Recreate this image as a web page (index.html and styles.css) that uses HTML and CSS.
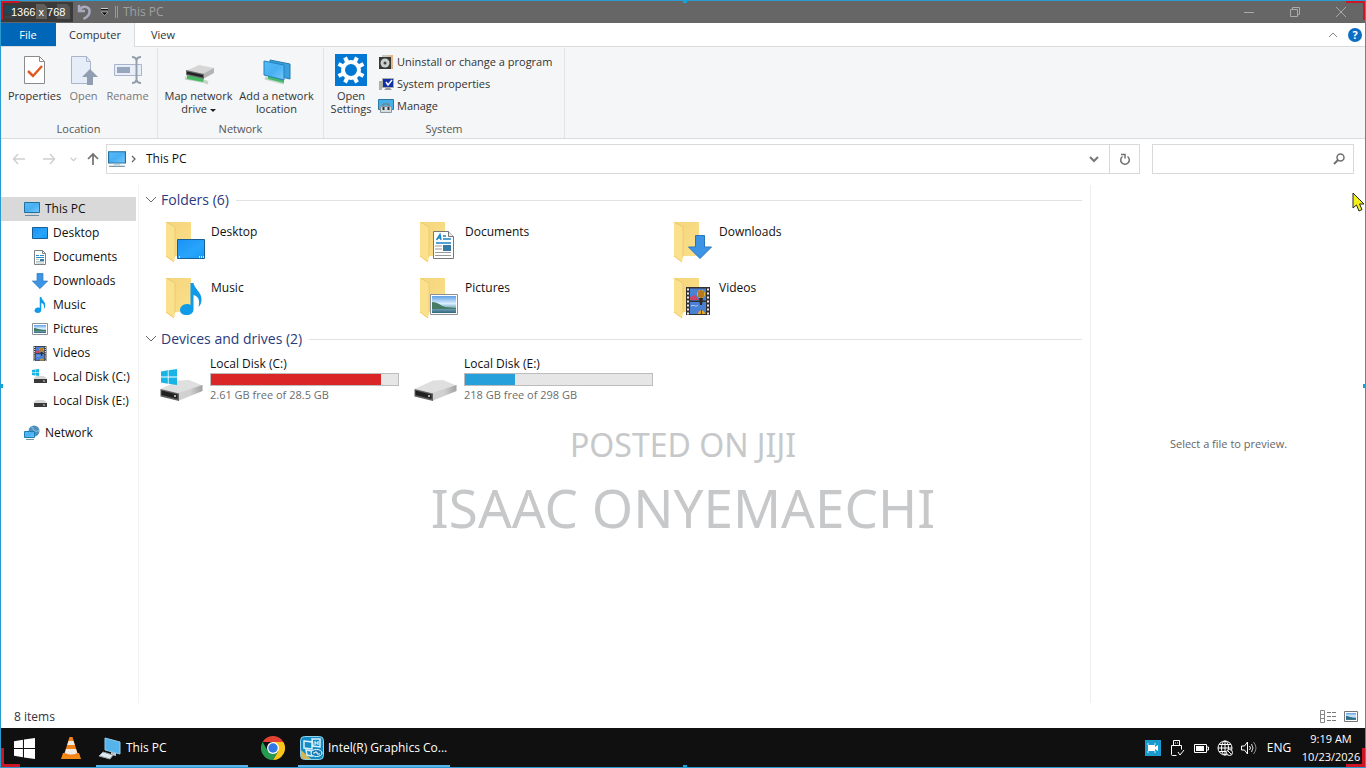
FILE: index.html
```html
<!DOCTYPE html>
<html lang="en">
<head>
<meta charset="utf-8">
<title>This PC</title>
<link rel="stylesheet" href="styles.css">
</head>
<body>
<svg class="defs" aria-hidden="true">
  <defs>
    <linearGradient id="blue" x1="0" y1="0" x2="1" y2="1"><stop offset="0" stop-color="#55bdf8"/><stop offset=".5" stop-color="#48b0f2"/><stop offset="1" stop-color="#75c8fb"/></linearGradient>
    <linearGradient id="desk" x1="0" y1="0" x2="1" y2="1"><stop offset="0" stop-color="#1c91f5"/><stop offset=".6" stop-color="#27a5fb"/><stop offset="1" stop-color="#1699f5"/></linearGradient>
    <linearGradient id="fold" x1="0" y1="0" x2="1" y2="1"><stop offset="0" stop-color="#f5d57c"/><stop offset="1" stop-color="#fbdf8b"/></linearGradient>
    <linearGradient id="metal" x1="0" y1="0" x2="1" y2="0"><stop offset="0" stop-color="#d2d2d2"/><stop offset=".5" stop-color="#d0d0d0"/><stop offset="1" stop-color="#a0a0a0"/></linearGradient>
    <linearGradient id="sky" x1="0" y1="0" x2="0" y2="1"><stop offset="0" stop-color="#5e9fe6"/><stop offset=".45" stop-color="#dcefff"/><stop offset=".6" stop-color="#9dc3d8"/><stop offset="1" stop-color="#2f6680"/></linearGradient>
    <symbol id="i-pc" viewBox="0 0 16 16"><path d="M.5 1.500h15v10H.5z" fill="url(#blue)" stroke="#22709e"/><path d="M5 13h6" stroke="#b9d3e2"/><path d="M1 14.500h14" stroke="#6f8b9b"/></symbol>
    <symbol id="i-desktop" viewBox="0 0 28 20"><path d="M.5.5h27v19H.5z" fill="url(#desk)" stroke="#185f95"/><path d="M2 18h1M22 18h1M24 18h1M26 18h1" stroke="#fff" stroke-width="1.500"/></symbol>
    <symbol id="i-doc" viewBox="0 0 21 28"><path d="M.5.5h15l5 5v22H.5z" fill="#fff" stroke="#777"/><path d="M15.500.5v5h5" fill="#eee" stroke="#777"/><path d="M3.500 9L7 3.500 8 9M5 7h3M10 5h3M10 8h8M3 12h15" fill="none" stroke="#1b83c6" stroke-width="1.400"/><path d="M10 14h8v6h-8z" fill="#3778a4"/><path d="M2 15h7M2 18h7M2 21.500h16M2 24.500h16" stroke="#999"/></symbol>
    <symbol id="i-doc-small" viewBox="0 0 12 15"><path d="M.5.5h8l3 3v11H.5z" fill="#fff" stroke="#7d8286"/><path d="M8.500.5v3h3" fill="none" stroke="#7d8286"/><path d="M2 5.500h3M6 5.500h4M2 7.500h8" stroke="#2b8ac4"/><path d="M6 9h4v2H6z" fill="#3778a4"/><path d="M2 9.500h3M2 11.500h8M2 13h8" stroke="#8aa" stroke-width=".7"/></symbol>
    <symbol id="i-down" viewBox="0 0 24 24"><path d="M7.500.5h9V12h7L12 23.500.5 12h7z" fill="#3e94e4" stroke="#2877bd"/></symbol>
    <symbol id="i-music" viewBox="0 0 22 32"><path d="M10.500 0h3c1 6 8 9 8 16 0 4-1 6-3 8 2-8-1-11-5-12v14c0 4-3 6-7 6S0 30 0 27s3-6 7-6c1.500 0 2.500.3 3.500 1z" fill="#109be8"/></symbol>
    <symbol id="i-pic" viewBox="0 0 28 21"><path d="M.5.5h27v20H.5z" fill="#fff" stroke="#8b9297"/><path d="M2 2h24v17H2z" fill="url(#sky)"/><path d="M2 8c5 0 8 3 13 5l11 1v1H2z" fill="#467b64"/></symbol>
    <symbol id="i-pic-small" viewBox="0 0 16 12"><path d="M.5.5h15v11H.5z" fill="#fff" stroke="#8b9297"/><path d="M2 2h12v8H2z" fill="url(#sky)"/><path d="M2 5c3 0 5 2 12 2v1H2z" fill="#467b64"/></symbol>
    <symbol id="i-video" viewBox="0 0 24 28"><path d="M0 0h24v28H0z" fill="#33302f"/><path d="M4 1.500h16v12H4zM4 15h16v12H4z" fill="#4b81d5"/><path d="M4 10l5-2 4 5H4z" fill="#cb4766"/><circle cx="15" cy="7" r="4" fill="#e5b622"/><path d="M15 3v8M13 4v6M17 4v6" stroke="#8a3d24"/><path d="M13 11h4l-1 7h-2z" fill="#342a22"/><path d="M12 27c0-5 7-5 7 0z" fill="#e6a824"/><path d="M15.500 23v4" stroke="#8a3d24"/><path d="M5 19c3-2 5 2 7-1" stroke="#b8d4ed" fill="none"/><path d="M2 1.500v26M22 1.500v26" stroke="#eee" stroke-width="2" stroke-dasharray="2 2"/></symbol>
    <symbol id="i-drive" viewBox="0 0 43 21"><path d="M.5 9L19 .5l10-.5 13.500 5.500L19 15z" fill="#dfdfdf"/><path d="M18 13l24.500-8v6L18 21z" fill="url(#metal)"/><path d="M.5 9L19 13.500V21L.5 16.500z" fill="#5f5f5f"/><path d="M1.500 10.500l16 4v4.500l-16-4z" fill="#202020"/><path d="M14 16h2" stroke="#ddd" stroke-width="1.500"/></symbol>
    <symbol id="i-win" viewBox="0 0 20 20"><path d="M0 3l8.500-1.300v7.800H0zM9.500 1.500L20 0v9.500H9.500zM0 10.500h8.500v7.800L0 17zM9.500 10.500H20V20L9.500 18.500z" fill="currentColor"/></symbol>
    <symbol id="i-sdrive" viewBox="0 0 16 16"><path d="M4 7h8l3 3H1z" fill="#d8d8d8"/><path d="M2 10h13v4H2z" fill="#393939"/><path d="M11 12h2" stroke="#ddd"/></symbol>
    <symbol id="i-folder" viewBox="0 0 27 42"><path d="M1 1h25v34H9z" fill="url(#fold)"/><path d="M1 1l9 5v30l-1 5-8-6z" fill="#fbe18d"/><path d="M1 1l9 5v30" fill="none" stroke="#e4bf61" stroke-width=".6"/><path d="M1 35l8 6" stroke="#f2c757"/></symbol>
    <symbol id="i-net" viewBox="0 0 16 16"><circle cx="10" cy="6" r="5.500" fill="#4e8fbd"/><path d="M7 2c3 0 1 3 4 4s3-2 4 1" stroke="#9bcbe2" fill="none"/><path d="M.5 6.500h10v6H.5z" fill="url(#blue)" stroke="#217eb5"/><path d="M2 14.500h8" stroke="#6f98b1"/></symbol>
    <symbol id="i-chev" viewBox="0 0 12 8"><path d="M1 1l5 5 5-5" fill="none" stroke="currentColor"/></symbol>
  </defs>
</svg>

<div class="screen">
  <header class="titlebar">
    <div class="quick">
      <svg width="72" height="20" viewBox="0 0 72 20"><path d="M5 4h11v8H5z" fill="#1f86b8"/><path d="M5 15h10" stroke="#6d9cb2"/><path d="M36 2h8l3 3v12H36z" fill="#d8cdc4"/><path d="M57 2h10l3 3v12H57z" fill="#b5b5b5"/></svg>
      <span class="size-tag">1366 x 768</span>
    </div>
    <button class="plain undo" aria-label="Undo"><svg width="15" height="16" viewBox="0 0 15 16"><path d="M2 1v6h6M2.500 6.500C5 1 13 2 12.500 8c0 3-2 5-6 7" fill="none" stroke="#aaa9bd" stroke-width="2.500"/></svg></button>
    <button class="plain customize" aria-label="Customize toolbar"><svg width="9" height="8" viewBox="0 0 9 8"><path d="M1 .5h7" stroke="#ccc"/><path d="M1 1.500h7" stroke="#111"/><path d="M1 4h7L4.500 7.500z" fill="#111" stroke="#ccc" stroke-width=".6"/></svg></button>
    <span class="title-divider"></span>
    <h1 class="window-title">This PC</h1>
    <div class="window-controls">
      <button class="plain" aria-label="Minimize"><svg width="12" height="12" viewBox="0 0 12 12"><path d="M1 6.500h10" stroke="#aaa"/></svg></button>
      <button class="plain" aria-label="Restore"><svg width="12" height="12" viewBox="0 0 12 12"><path d="M1.500 3.500h7v7h-7zM3.500 3.500v-2h7v7h-2" fill="none" stroke="#aaa"/></svg></button>
      <button class="plain" aria-label="Close"><svg width="12" height="12" viewBox="0 0 12 12"><path d="M1 1l10 10M11 1L1 11" stroke="#aaa"/></svg></button>
    </div>
  </header>

  <nav class="tabs" aria-label="Ribbon tabs">
    <button class="tab tab-file">File</button>
    <button class="tab tab-active">Computer</button>
    <button class="tab">View</button>
    <span class="tab-tools">
      <button class="plain collapse" aria-label="Collapse ribbon"><svg width="10" height="6" viewBox="0 0 10 6"><path d="M1 5l4-4 4 4" fill="none" stroke="#888"/></svg></button>
      <button class="help" aria-label="Help">?</button>
    </span>
  </nav>

  <section class="ribbon" aria-label="Computer">
    <div class="group group-location">
      <div class="commands">
        <button class="command cmd-properties"><svg width="24" height="32" viewBox="0 0 24 32"><path d="M1.500 2.500h15l5 5v22h-20z" fill="#fff" stroke="#8b8b8b"/><path d="M16.500 2.500v5h5" fill="none" stroke="#8b8b8b"/><path d="M5 17l5 5 9-10" fill="none" stroke="#e25a22" stroke-width="2.500"/></svg><span>Properties</span></button>
        <button class="command cmd-open" disabled><svg width="28" height="32" viewBox="0 0 28 32"><path d="M1.500 2.500h15l4 5v22h-19z" fill="#e5edf9" stroke="#aab5ca"/><path d="M16.500 2.500v5h4" fill="none" stroke="#aab5ca"/><path d="M20 15l8 8h-5v8h-6v-8h-5z" fill="#919db1"/></svg><span>Open</span></button>
        <button class="command cmd-rename" disabled><svg width="28" height="32" viewBox="0 0 28 32"><path d="M.5 10.500h27v11H.5z" fill="#e8eef8" stroke="#a8b5cc"/><path d="M3 13h13v6H3z" fill="#98a6bd"/><path d="M18 3c3 0 4 1 4.500 3 .5-2 2-3 4.500-3M22.500 5v22M18 29c3 0 4-1 4.500-3 .5 2 2 3 4.500 3" fill="none" stroke="#939dac" stroke-width="2"/></svg><span>Rename</span></button>
      </div>
      <h2 class="group-name">Location</h2>
    </div>
    <div class="group group-network">
      <div class="commands">
        <button class="command cmd-map"><svg width="32" height="32" viewBox="0 0 32 32"><path d="M2 24l22 4M8 22l17 7" stroke="#c3d3c5" stroke-width="3"/><path d="M4 21l17 3-1 4-16-3z" fill="#46b963"/><path d="M3 17l13-6 15 3-10 8z" fill="#d6d6d6"/><path d="M20 20l11-6v5l-11 6z" fill="#b4b4b4"/><path d="M3 16l18 4v5L3 21z" fill="#6d6d6d"/><path d="M4 17.500l16 3.500v2.500L4 20z" fill="#222"/></svg><span>Map network<br>drive <i class="caret"></i></span></button>
        <button class="command cmd-add"><svg width="30" height="32" viewBox="0 0 30 32"><path d="M3 24l19 5" stroke="#bfd6c9" stroke-width="3"/><path d="M6 22l16 3v4L6 25z" fill="#46b86c"/><path d="M8 6l20 4v15L8 20z" fill="#3ba0de" stroke="#257cae"/><path d="M2 7l20 4v15L2 21z" fill="url(#blue)" stroke="#2380bd"/></svg><span>Add a network<br>location</span></button>
      </div>
      <h2 class="group-name">Network</h2>
    </div>
    <div class="group group-system">
      <div class="commands">
        <button class="command cmd-settings"><svg width="32" height="32" viewBox="0 0 32 32"><path d="M0 0h32v32H0z" fill="#0078d4"/><circle cx="16" cy="16" r="8" fill="none" stroke="#fff" stroke-width="4"/><g stroke="#fff" stroke-width="4"><path d="M12.500 8.500L10 3.500M19.500 8.500L22 3.500M8.500 12.500l-5-2.500M8.500 19.500l-5 2.500M12.500 23.500L10 28.500M19.500 23.500l2.500 5M23.500 12.500l5-2.500M23.500 19.500l5 2.500"/></g></svg><span>Open<br>Settings</span></button>
        <div class="command-list">
          <button class="small-command"><svg width="16" height="16" viewBox="0 0 16 16"><path d="M4 1h7v10H4z" fill="#c8cac8"/><path d="M10 1h5v14h-5z" fill="#e1b68e"/><path d="M1 3h12v12H1z" fill="#343936"/><circle cx="7" cy="9" r="4.500" fill="#ccd0cb"/><circle cx="7" cy="9" r="1.500" fill="#444"/></svg>Uninstall or change a program</button>
          <button class="small-command"><svg width="16" height="16" viewBox="0 0 16 16"><path d="M1 5h3v9H1z" fill="#adb4a0"/><path d="M4.500 2.500h11v9h-11z" fill="#132fa8" stroke="#aaa"/><path d="M8 6l2 3 4-5" fill="none" stroke="#fff" stroke-width="1.500"/><path d="M8 12h4l2 2H6z" fill="#999"/></svg>System properties</button>
          <button class="small-command"><svg width="16" height="16" viewBox="0 0 16 16"><path d="M.5 1.500h15v10H.5z" fill="#48b0e6" stroke="#267ba4"/><path d="M5 8V6h6v2" fill="none" stroke="#777"/><path d="M2.500 8.500h11v6h-11z" fill="#d7dce0" stroke="#8c969e"/><path d="M5.500 9v3M10.500 9v3" stroke="#333" stroke-width="2"/></svg>Manage</button>
        </div>
      </div>
      <h2 class="group-name">System</h2>
    </div>
  </section>

  <div class="address-row">
    <div class="history">
      <button class="plain" aria-label="Back" disabled><svg width="14" height="12" viewBox="0 0 14 12"><path d="M13 6H2M6 1L1.500 6 6 11" fill="none" stroke="#d0d0d0" stroke-width="1.500"/></svg></button>
      <button class="plain" aria-label="Forward" disabled><svg width="14" height="12" viewBox="0 0 14 12"><path d="M1 6h11M8 1l4.500 5L8 11" fill="none" stroke="#d0d0d0" stroke-width="1.500"/></svg></button>
      <button class="plain recent" aria-label="Recent locations" disabled><svg width="7" height="5" viewBox="0 0 12 8"><path d="M1 1l5 5 5-5" fill="none" stroke="#ccc" stroke-width="2"/></svg></button>
      <button class="plain up" aria-label="Up"><svg width="12" height="14" viewBox="0 0 12 14"><path d="M6 13V2M1 7l5-5 5 5" fill="none" stroke="#707070" stroke-width="1.700"/></svg></button>
    </div>
    <div class="address">
      <svg width="18" height="18"><use href="#i-pc"/></svg>
      <svg width="5" height="8" viewBox="0 0 5 8"><path d="M1 1l3 3-3 3" fill="none" stroke="#666" stroke-width="1.300"/></svg>
      <a href="#" class="crumb">This PC</a>
      <button class="plain address-drop" aria-label="Previous locations"><svg width="10" height="7" viewBox="0 0 10 7"><path d="M1 1l4 4 4-4" fill="none" stroke="#777" stroke-width="2"/></svg></button>
      <button class="plain refresh" aria-label="Refresh"><svg width="12" height="13" viewBox="0 0 12 13"><path d="M8.500 3.500a4.300 4.300 0 1 1-5 0M2 1.500h4v4" fill="none" stroke="#707070" stroke-width="1.500"/></svg></button>
    </div>
    <div class="search">
      <input type="search" class="search-input" aria-label="Search This PC">
      <svg width="12" height="12" viewBox="0 0 12 12"><circle cx="7.500" cy="4.500" r="3.500" fill="none" stroke="#707070" stroke-width="1.500"/><path d="M5 7L1 11" stroke="#707070" stroke-width="2"/></svg>
    </div>
  </div>

  <div class="body">
    <nav class="sidebar" aria-label="Navigation pane">
      <a href="#" class="side root selected"><svg width="16" height="16"><use href="#i-pc"/></svg>This PC</a>
      <a href="#" class="side"><svg width="16" height="12" viewBox="0 0 16 12"><path d="M.5.5h15v11H.5z" fill="url(#desk)" stroke="#185f95"/></svg>Desktop</a>
      <a href="#" class="side"><svg width="16" height="15"><use href="#i-doc-small"/></svg>Documents</a>
      <a href="#" class="side"><svg width="16" height="16"><use href="#i-down"/></svg>Downloads</a>
      <a href="#" class="side"><svg width="16" height="16"><use href="#i-music"/></svg>Music</a>
      <a href="#" class="side"><svg width="16" height="12"><use href="#i-pic-small"/></svg>Pictures</a>
      <a href="#" class="side"><svg width="16" height="15"><use href="#i-video"/></svg>Videos</a>
      <a href="#" class="side"><svg width="16" height="16" class="cyan"><use href="#i-sdrive"/><use href="#i-win" width="7" height="7"/></svg>Local Disk (C:)</a>
      <a href="#" class="side"><svg width="16" height="16"><use href="#i-sdrive"/></svg>Local Disk (E:)</a>
      <a href="#" class="side root network"><svg width="16" height="16"><use href="#i-net"/></svg>Network</a>
    </nav>

    <main class="files">
      <section>
        <h2 class="section-head"><svg width="12" height="8"><use href="#i-chev"/></svg>Folders (6)<span class="rule"></span></h2>
        <div class="tiles">
          <a href="#" class="tile"><svg width="46" height="48" viewBox="0 0 46 48"><use href="#i-folder" width="27" height="42"/><use href="#i-desktop" x="12" y="18" width="28" height="20"/></svg><span>Desktop</span></a>
          <a href="#" class="tile"><svg width="46" height="48" viewBox="0 0 46 48"><use href="#i-folder" width="27" height="42"/><use href="#i-doc" x="14" y="10" width="21" height="28"/></svg><span>Documents</span></a>
          <a href="#" class="tile"><svg width="46" height="48" viewBox="0 0 46 48"><use href="#i-folder" width="27" height="42"/><use href="#i-down" x="15" y="14" width="24" height="24"/></svg><span>Downloads</span></a>
          <a href="#" class="tile"><svg width="46" height="48" viewBox="0 0 46 48"><use href="#i-folder" width="27" height="42"/><use href="#i-music" x="15" y="6" width="22" height="32"/></svg><span>Music</span></a>
          <a href="#" class="tile"><svg width="46" height="48" viewBox="0 0 46 48"><use href="#i-folder" width="27" height="42"/><use href="#i-pic" x="11" y="17" width="28" height="21"/></svg><span>Pictures</span></a>
          <a href="#" class="tile"><svg width="46" height="48" viewBox="0 0 46 48"><use href="#i-folder" width="27" height="42"/><use href="#i-video" x="13" y="10" width="24" height="28"/></svg><span>Videos</span></a>
        </div>
      </section>
      <section>
        <h2 class="section-head"><svg width="12" height="8"><use href="#i-chev"/></svg>Devices and drives (2)<span class="rule"></span></h2>
        <div class="drives">
          <a href="#" class="drive">
            <svg width="44" height="48" viewBox="0 0 44 48" class="cyan"><use href="#i-drive" y="25" width="43" height="21"/><use href="#i-win" x="1" y="14" width="16" height="16"/></svg>
            <span class="drive-info"><span>Local Disk (C:)</span><span class="bar"><span class="fill full" style="width:91%"></span></span><span class="free">2.61 GB free of 28.5 GB</span></span>
          </a>
          <a href="#" class="drive">
            <svg width="44" height="48" viewBox="0 0 44 48"><use href="#i-drive" y="25" width="43" height="21"/></svg>
            <span class="drive-info"><span>Local Disk (E:)</span><span class="bar"><span class="fill" style="width:27%"></span></span><span class="free">218 GB free of 298 GB</span></span>
          </a>
        </div>
      </section>
    </main>

    <aside class="preview">Select a file to preview.</aside>
  </div>

  <footer class="status">
    <span>8 items</span>
    <span class="view-modes">
      <button class="plain" aria-label="Details"><svg width="17" height="13" viewBox="0 0 17 13"><path d="M.5.5h4v12h-4zM.5 4.500h4M.5 8.500h4" fill="none" stroke="#888"/><path d="M7 2.500h4M12 2.500h4M7 6.500h4M12 6.500h4M7 10.500h4M12 10.500h4" stroke="#777"/></svg></button>
      <button class="plain" aria-label="Large icons"><svg width="14" height="11" viewBox="0 0 14 11"><path d="M.5.5h13v10H.5z" fill="#fff" stroke="#777"/><path d="M2 2h10v7H2z" fill="url(#sky)"/><path d="M2 5c3 0 5 2 10 2v1H2z" fill="#2d7089"/></svg></button>
    </span>
  </footer>

  <div class="taskbar">
    <button class="plain start" aria-label="Start"><svg width="21" height="21"><use href="#i-win"/></svg></button>
    <button class="plain vlc" aria-label="VLC"><svg width="22" height="24" viewBox="0 0 22 24"><path d="M3 17h16l2 6H1z" fill="#f28a17"/><path d="M9.500 1h3L18 19c-3 2-11 2-14 0z" fill="#f28116"/><path d="M8.500 5h5l1.300 4H7.200zM6 13h10l1.300 4c-4 2-8 2-12.600 0z" fill="#eeeae5"/></svg></button>
    <button class="task"><svg width="24" height="24" viewBox="0 0 24 24"><path d="M7 2l15 4v12L7 14z" fill="#56b4ed" stroke="#91cce9"/><path d="M13 16l5 1v3l-5-1z" fill="#b6c9d3"/><path d="M5 16l10 3-3 4-11-3z" fill="#dfe8ec" stroke="#95a3aa"/></svg>This PC</button>
    <button class="plain chrome" aria-label="Chrome"><svg width="24" height="24" viewBox="0 0 24 24"><path d="M1.600 6A12 12 0 0 1 22.400 6H12z" fill="#e34133"/><path d="M22.400 6A12 12 0 0 1 12 24l5.200-9-5.200-9z" fill="#f9c51d"/><path d="M1.600 6A12 12 0 0 0 12 24l5.200-9L12 17 6.800 15z" fill="#269b50"/><circle cx="12" cy="12" r="6" fill="#fff"/><circle cx="12" cy="12" r="4.700" fill="#3278e4"/></svg></button>
    <button class="task"><svg width="24" height="24" viewBox="0 0 24 24"><rect x=".5" y=".5" width="23" height="23" rx="4" fill="#158bc6" stroke="#91d3ed"/><path d="M1 14v6q0 3 3 3h7z" fill="#d6b653"/><path d="M4 5l8 1v7l-8-1zM12 3h8v8l-7-1zM6 14l6 1v5l-5-1z" fill="none" stroke="#d7f1fb" stroke-width="1.500"/><path d="M15 5v4M18 5v4M15 7h3" stroke="#fff"/><ellipse cx="16.500" cy="17" rx="5.500" ry="3.500" fill="#1477ae" stroke="#fff"/><path d="M13 17h2v-1h2v2h3" fill="none" stroke="#fff"/></svg>Intel(R) Graphics Co...</button>
    <div class="tray">
      <svg width="16" height="16" viewBox="0 0 16 16"><path d="M0 0h16v16H0z" fill="#199bce"/><path d="M3 5h7v6H3zM10 7l3-2v6l-3-2z" fill="#fff"/><path d="M2 4h2M2 12h2M9 4h2M9 12h2" stroke="#c5ebf7"/></svg>
      <svg width="16" height="16" viewBox="0 0 16 16"><path d="M4.500 5V.5h6V5M2.500 5.500h10v4M2.500 5.500v9q0 1 1 1h4M9 12l2 3 4-5M6 3h1M8 3h1" fill="none" stroke="#fff"/></svg>
      <svg width="16" height="16" viewBox="0 0 16 16"><path d="M1.500 4.500h12v8h-12zM13.500 7h2v3h-2" fill="none" stroke="#fff"/><path d="M3 6h8v5H3z" fill="#fff"/></svg>
      <svg width="16" height="16" viewBox="0 0 16 16"><circle cx="8" cy="8" r="7" fill="none" stroke="#fff"/><ellipse cx="8" cy="8" rx="3.500" ry="7" fill="none" stroke="#fff"/><path d="M1 8h14M2 4.500h12M2 11.500h7M8 1v14" stroke="#fff"/><circle cx="12.500" cy="12.500" r="3" fill="#111" stroke="#fff"/><path d="M10.500 10.500l4 4" stroke="#fff"/></svg>
      <svg width="16" height="16" viewBox="0 0 16 16"><path d="M.5 6h3l3-4v12l-3-4h-3zM8.500 6q2 2 0 4" fill="none" stroke="#fff"/><path d="M10.500 4q3 4 0 8" fill="none" stroke="#ddd"/><path d="M12.500 2q5 6 0 12" fill="none" stroke="#888"/></svg>
      <button class="plain lang">ENG</button>
      <button class="plain clock"><span>9:19 AM</span><span>10/23/2026</span></button>
    </div>
  </div>

  <div class="watermark"><span class="posted">POSTED ON JIJI</span><span class="owner">ISAAC ONYEMAECHI</span></div>
  <div class="frame"><i class="corner tl"></i><i class="corner tr"></i><i class="corner bl"></i><i class="corner br"></i><i class="grip top"></i><i class="grip bottom"></i><i class="grip left"></i><i class="grip right"></i></div>
  <svg class="cursor" width="13" height="20" viewBox="0 0 13 20"><path d="M1 1v15l3.500-3 2.500 6 3-1.500-2.500-5.500H12z" fill="#f5ef16" stroke="#222"/></svg>
</div>
</body>
</html>
```
FILE: styles.css
```css
* { box-sizing: border-box; }
body { margin: 0; font: 12px/16px "Open Sans", "Noto Sans", sans-serif; color: #111; }
button, input { font: inherit; color: inherit; }
svg { display: block; flex: none; }
a { color: inherit; text-decoration: none; }
h1, h2 { margin: 0; font-weight: 400; }
.defs { position: absolute; width: 0; height: 0; }
.cyan { color: #18b4e6; }
.plain { display: flex; align-items: center; justify-content: center; padding: 0; border: 0; background: none; }

.screen { position: relative; display: flex; flex-direction: column; min-height: 100vh; background: #fff; overflow: hidden; }

.titlebar { display: flex; align-items: center; height: 23px; background: #666; color: #a0a0a0; }
.quick { position: relative; width: 73px; height: 20px; }
.size-tag { position: absolute; inset: 0; padding-left: 11px; background: rgba(35, 35, 35, .65); color: #fff; font: 11px/20px "Liberation Sans", Arial, sans-serif; white-space: nowrap; }
.undo { width: 22px; }
.customize { width: 18px; }
.title-divider { width: 3px; height: 12px; margin: 0 5px 0 2px; border: solid #999; border-width: 0 1px; }
.window-title { flex: 1; font-size: 12px; line-height: 16px; }
.window-controls { display: flex; padding-right: 2px; }
.window-controls .plain { width: 46px; height: 16px; }

.tabs { display: flex; height: 24px; border-bottom: 1px solid #dadbdc; color: #333; font-size: 11px; }
.tab { width: 56px; padding: 0; border: 0; background: none; }
.tab-file { background: #0067b8; color: #fff; }
.tab-active { width: 79px; height: 24px; background: #f5f6f7; border-right: 1px solid #dadbdc; }
.tab-tools { display: flex; align-items: center; gap: 10px; margin-left: auto; padding-right: 4px; }
.help { width: 14px; height: 14px; padding: 0; border: 0; border-radius: 50%; background: #0b6ec2; color: #fff; font-size: 11px; font-weight: 700; line-height: 14px; }

.ribbon { display: flex; height: 92px; background: #f5f6f7; border-bottom: 1px solid #dadbdc; color: #333; font-size: 11px; }
.group { display: flex; flex-direction: column; margin-top: 1px; border-right: 1px solid #e2e3e4; }
.group-location { width: 158px; }
.group-network { width: 166px; }
.group-system { width: 241px; }
.commands { display: flex; flex: 1; justify-content: center; padding-top: 6px; }
.group-name { font-size: 11px; line-height: 18px; text-align: center; color: #555; }
.command { display: flex; flex-direction: column; align-items: center; gap: 3px; padding: 0; border: 0; background: none; color: #333; line-height: 13px; white-space: nowrap; }
.command:disabled { color: #777; }
.cmd-properties { width: 56px; }
.cmd-open { width: 42px; }
.cmd-rename { width: 46px; }
.cmd-map, .cmd-add { width: 78px; }
.cmd-settings { width: 44px; }
.caret { display: inline-block; border: 3px solid transparent; border-top-color: #222; border-bottom: 0; vertical-align: middle; }
.group-network .commands { padding-right: 6px; }
.group-system .commands { justify-content: flex-start; padding-left: 5px; }
.command-list { display: flex; flex-direction: column; padding-left: 5px; }
.small-command { display: flex; align-items: center; gap: 3px; height: 22px; padding: 0 0 6px; border: 0; background: none; line-height: 16px; white-space: nowrap; }

.address-row { display: flex; height: 46px; padding: 5px 12px 11px 0; }
.history { display: flex; align-items: center; width: 106px; padding-left: 4px; }
.history .plain { width: 30px; }
.history .recent { width: 18px; }
.history .up { width: 22px; }
.address { display: flex; flex: 1; align-items: center; padding-left: 1px; border: 1px solid #d9d9d9; }
.address > svg + svg { margin-left: 5px; }
.crumb { margin-left: 10px; flex: 1; }
.address-drop { width: 30px; height: 28px; }
.refresh { width: 30px; height: 28px; border-left: 1px solid #d9d9d9; }
.search { display: flex; align-items: center; width: 202px; margin-left: 12px; padding-right: 8px; border: 1px solid #d9d9d9; }
.search-input { flex: 1; min-width: 0; height: 26px; border: 0; outline: 0; background: none; }

.body { display: flex; flex: 1; }
.sidebar { width: 139px; padding-top: 12px; border-right: 1px solid #f3f3f3; }
.side { display: flex; align-items: center; gap: 5px; height: 24px; margin-right: 2px; padding-left: 32px; white-space: nowrap; }
.root { padding-left: 24px; }
.selected { background: #d9d9d9; }
.network { margin-top: 8px; }

.files { flex: 1; min-width: 0; padding: 4px 8px 0 6px; }
.section-head { display: flex; align-items: center; gap: 4px; height: 22px; font-size: 14px; color: #2b3a7d; }
.section-head svg { color: #666; }
.rule { flex: 1; height: 1px; margin-left: 3px; background: #e2e2e2; }
.tiles { display: grid; grid-template-columns: repeat(3, 254px); grid-auto-rows: 56px; padding: 10px 0 0 20px; margin-bottom: -5px; }
.tile { display: flex; line-height: 22px; }
.drives { display: grid; grid-template-columns: repeat(2, 254px); padding: 5px 0 0 15px; }
.drive { display: flex; gap: 6px; }
.drive-info { display: flex; flex-direction: column; width: 189px; line-height: 18px; }
.bar { height: 13px; border: 1px solid #bcbcbc; background: #e6e6e6; }
.fill { display: block; height: 100%; background: #26a0da; }
.full { background: #da2626; }
.free { color: #6d6d6d; font-size: 11px; }
.preview { display: flex; align-items: center; justify-content: center; width: 276px; border-left: 1px solid #eee; color: #666; font-size: 11px; }

.status { display: flex; align-items: center; justify-content: space-between; height: 25px; padding: 2px 8px 0 14px; color: #334; }
.view-modes { display: flex; gap: 7px; }

.taskbar { display: flex; height: 40px; background: #101010; color: #fff; }
.start { width: 48px; }
.vlc { width: 46px; margin-right: 2px; }
.task { display: flex; align-items: center; gap: 4px; width: 152px; padding: 0 0 0 2px; border: 0; border-bottom: 3px solid #5ab2eb; border-top: 3px solid transparent; background: none; white-space: nowrap; }
.task + .chrome { width: 50px; }
.tray { display: flex; align-items: center; gap: 8px; margin-left: auto; padding-right: 5px; }
.lang { width: 28px; }
.clock { flex-direction: column; width: 60px; font-size: 11px; line-height: 18px; }

.watermark { position: absolute; left: 0; right: 0; top: 422px; display: flex; flex-direction: column; align-items: center; color: #c6c8ca; font-family: "Noto Sans", sans-serif; white-space: nowrap; pointer-events: none; }
.posted { font-size: 32px; line-height: 46px; }
.owner { font-size: 53px; line-height: 80px; }
.frame { position: absolute; inset: 0; border: 1px solid #2a9bd0; pointer-events: none; }
.corner { position: absolute; width: 19px; height: 19px; border: 0 solid #cc1625; }
.tl { top: 0; left: 0; border-width: 2px 0 0 2px; }
.tr { top: 0; right: 0; border-width: 2px 2px 0 0; }
.bl { bottom: 0; left: 0; border-width: 0 0 3px 3px; }
.br { bottom: 0; right: 0; border-width: 0 3px 3px 0; }
.grip { position: absolute; width: 4px; height: 4px; background: #14a5d8; }
.top { top: -2px; left: 50%; }
.bottom { bottom: -2px; left: 50%; }
.left { left: -2px; top: 50%; }
.right { right: -2px; top: 50%; }
.cursor { position: absolute; top: 192px; right: 1px; }
```
